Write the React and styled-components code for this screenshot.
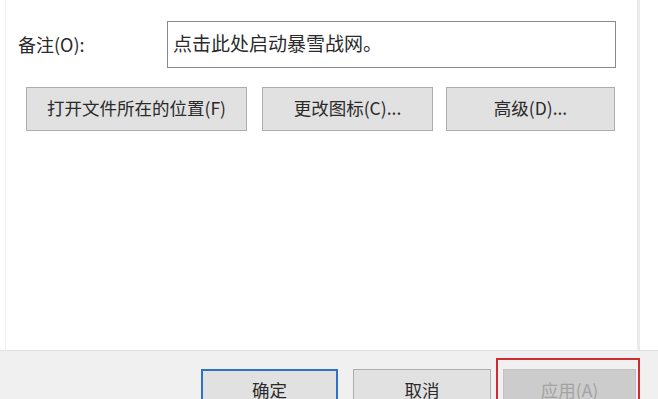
import React from "react";
import styled, { createGlobalStyle } from "styled-components";

const Global = createGlobalStyle`
  html, body { margin: 0; padding: 0; background: #ffffff; }
  * { box-sizing: border-box; }
`;

const Window = styled.div`
  width: 658px;
  height: 399px;
  overflow: hidden;
  display: flex;
  flex-direction: column;
  font-family: "Noto Sans CJK SC", "Microsoft YaHei", sans-serif;
  color: #1e1e1e;
  background: #ffffff;
`;

const Top = styled.div`
  height: 350px;
  flex: none;
  padding-left: 5px;
  display: flex;
`;

const Panel = styled.div`
  width: 635px;
  height: 100%;
  border-left: 1px solid #f0f0f0;
  border-right: 3px solid #ebebeb;
  padding: 21px 0 0 12px;
  display: flex;
  flex-direction: column;
  gap: 19px;
`;

const Row = styled.div`
  display: flex;
  align-items: center;
  padding-left: ${(p) => p.$indent || 0}px;
`;

const Label = styled.div`
  width: 149px;
  font-size: 18px;
  color: #2a2a2a;
  padding-bottom: 2px;
`;

const TextBox = styled.div`
  width: 449px;
  height: 47px;
  border: 1.5px solid #8a8a8a;
  background: #fff;
  display: flex;
  align-items: center;
  padding: 0 0 4px 5px;
  font-size: 19px;
  color: #2a2a2a;
`;

const Button = styled.div`
  width: ${(p) => p.$w}px;
  height: 44px;
  flex: none;
  display: flex;
  align-items: center;
  justify-content: center;
  font-size: 17.5px;
  padding-bottom: 3px;
  background: ${(p) => (p.$disabled ? "#cccccc" : "#e1e1e1")};
  color: ${(p) => (p.$disabled ? "#a3a3a3" : "#2a2a2a")};
  border: ${(p) =>
    p.$primary ? "2px solid #2d72c8" : p.$disabled ? "1px solid #c2c2c2" : "1px solid #adadad"};
`;

const Footer = styled.div`
  flex: 1;
  background: #f0f0f0;
  border-top: 1px solid #e2e2e2;
  display: flex;
  justify-content: flex-end;
  align-items: flex-start;
  padding: 18px 22px 0 0;
`;

const Gap = styled.div`
  width: ${(p) => p.$w}px;
  flex: none;
`;

const Marked = styled.div`
  position: relative;
`;

const RedFrame = styled.div`
  position: absolute;
  left: -7px;
  top: -11px;
  right: -4px;
  height: 80px;
  border: 2px solid #cf2b37;
  pointer-events: none;
`;

export default function App() {
  return (
    <>
      <Global />
      <Window>
        <Top>
          <Panel>
            <Row>
              <Label>备注(O):</Label>
              <TextBox>点击此处启动暴雪战网。</TextBox>
            </Row>
            <Row $indent={8}>
              <Button $w={221}>打开文件所在的位置(F)</Button>
              <Gap $w={15} />
              <Button $w={171}>更改图标(C)...</Button>
              <Gap $w={13} />
              <Button $w={169}>高级(D)...</Button>
            </Row>
          </Panel>
        </Top>
        <Footer>
          <Button $w={137} $primary>确定</Button>
          <Gap $w={15} />
          <Button $w={138}>取消</Button>
          <Gap $w={12} />
          <Marked>
            <Button $w={133} $disabled>应用(A)</Button>
            <RedFrame />
          </Marked>
        </Footer>
      </Window>
    </>
  );
}
